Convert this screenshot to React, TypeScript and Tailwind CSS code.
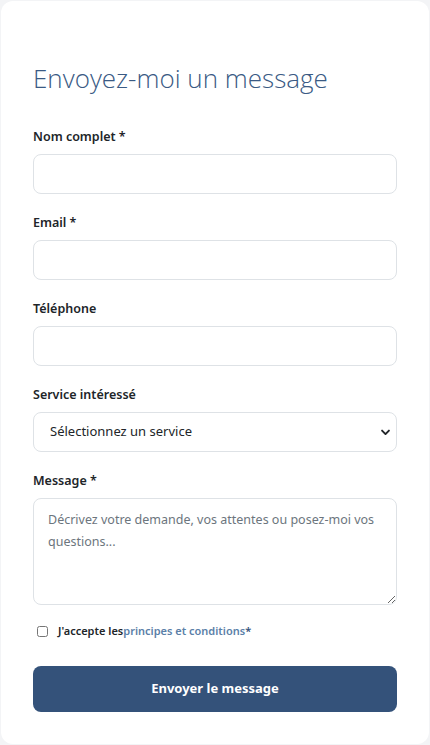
import React from 'react'

const bodyFont = { fontFamily: '"Noto Sans", "Open Sans", sans-serif' }

function Field({ label, children }: { label: string; children: React.ReactNode }) {
  return (
    <div className="mb-[19px]">
      <label className="block text-[12.5px] font-semibold text-[#212529] leading-5 mb-[7px]">{label}</label>
      {children}
    </div>
  )
}

const inputCls =
  'block w-full h-10 rounded-lg border border-[#dee2e6] bg-white px-4 text-[13px] text-[#212529] outline-none'

export default function App() {
  return (
    <div className="min-h-[745px] bg-[#f3f4f6] p-px" style={bodyFont}>
      <div className="rounded-xl bg-white px-8 pt-[59px] pb-[31px] min-h-[743px]">
        <h2
          className="text-[26px] font-light leading-9 text-[#3a5a84] mb-[31px]"
          style={{ fontFamily: '"Open Sans", "Noto Sans", sans-serif', fontWeight: 300 }}
        >
          Envoyez-moi un message
        </h2>

        <form onSubmit={(e) => e.preventDefault()}>
          <Field label="Nom complet *">
            <input type="text" className={inputCls} />
          </Field>
          <Field label="Email *">
            <input type="email" className={inputCls} />
          </Field>
          <Field label="Téléphone">
            <input type="tel" className={inputCls} />
          </Field>
          <Field label="Service intéressé">
            <div className="relative">
              <select className={inputCls + ' appearance-none'} defaultValue="">
                <option value="">Sélectionnez un service</option>
              </select>
              <svg
                className="absolute right-[6px] top-1/2 -translate-y-1/2 w-[11px] h-[11px] pointer-events-none"
                viewBox="0 0 16 16"
                fill="none"
                stroke="#212529"
                strokeWidth="2.8"
                strokeLinecap="round"
                strokeLinejoin="round"
              >
                <path d="M3 6l5 5 5-5" />
              </svg>
            </div>
          </Field>
          <div>
            <label className="block text-[12.5px] font-semibold text-[#212529] leading-5 mb-[7px]">Message *</label>
            <textarea
              className="block w-full h-[107px] rounded-lg border border-[#dee2e6] bg-white px-[14px] py-[10px] text-[12.5px] leading-[22px] text-[#212529] placeholder:text-[#6c757d] outline-none"
              placeholder="Décrivez votre demande, vos attentes ou posez-moi vos questions..."
            />
          </div>

          <div className="flex items-center gap-[10px] pl-[4px] mt-[16px] mb-[25px] h-5">
            <input type="checkbox" className="w-[11px] h-[11px] m-0" />
            <span className="text-[11px] font-semibold text-[#212529] leading-5">
              J'accepte les<a href="#" className="text-[#5b80a8]">principes et conditions</a>
              <span className="text-[#34527a]">*</span>
            </span>
          </div>

          <button
            type="submit"
            className="w-full h-[46px] rounded-lg bg-[#34527a] text-white text-[13px] font-bold"
          >
            Envoyer le message
          </button>
        </form>
      </div>
    </div>
  )
}
